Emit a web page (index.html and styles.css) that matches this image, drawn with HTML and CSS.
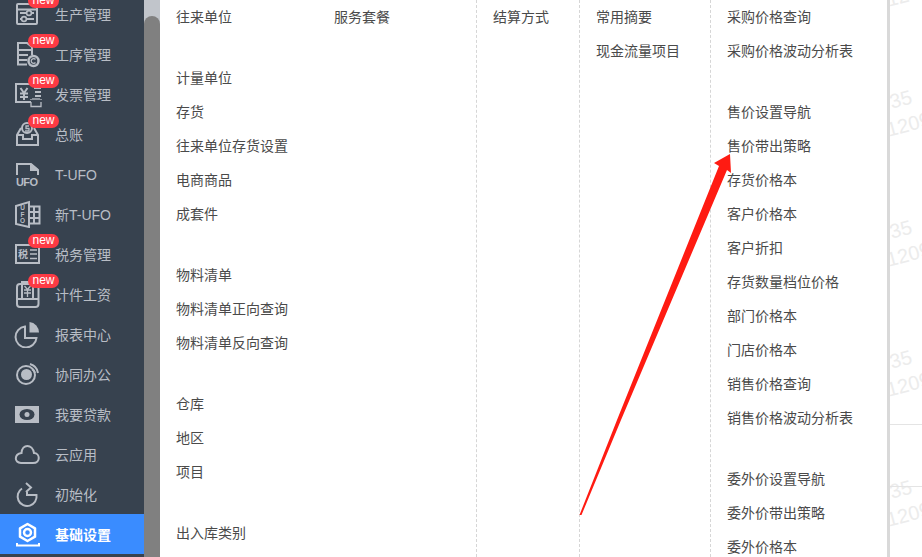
FILE: index.html
```html
<!DOCTYPE html>
<html lang="zh-CN">
<head>
<meta charset="utf-8">
<title>基础设置</title>
<link rel="stylesheet" href="styles.css">
</head>
<body>
<div class="app">
  <nav class="sidebar">
    <div class="nav-list">
      <div class="nav-item"><svg class="ico" viewBox="0 0 28 28"><rect x="3" y="4" width="20" height="20" rx="1"/><path d="M3 9.500H23M6 13H20M6 19H20"/><circle class="pad" cx="15" cy="13" r="2.400"/><circle class="pad" cx="10" cy="19" r="2.400"/></svg><span class="badge">new</span><span>生产管理</span></div>
      <div class="nav-item"><svg class="ico" viewBox="0 0 28 28"><path d="M13 24.500H4V3H13L18 7V15"/><path d="M4 10H17M4 15H14M4 20H13"/><circle class="thick" cx="19.500" cy="21" r="5"/><path class="thin" d="M21.500 19.500A2.400 2.400 0 1 0 21.500 22.500"/></svg><span class="badge">new</span><span>工序管理</span></div>
      <div class="nav-item"><svg class="ico" viewBox="0 0 28 28"><path d="M17 22H2V4H19"/><path d="M6.500 8L10 13L13.500 8M6 13.500H14M6 17H14M10 13V20"/><path d="M20 8H27M21 12H27M21 16H27"/><path class="thin" d="M17 22V26.500H27V22M17 19V20M27 19V20"/><path class="thin" d="M18 19H26"/></svg><span class="badge">new</span><span>发票管理</span></div>
      <div class="nav-item"><svg class="ico" viewBox="0 0 28 28"><path d="M7 8L3 15V25H24V15L20 8"/><path d="M3 15H9V19H18V15H24"/><circle cx="13" cy="8" r="5"/><path class="thin" d="M15 6H12V8.500H15V11H11"/></svg><span class="badge">new</span><span>总账</span></div>
      <div class="nav-item"><svg class="ico" viewBox="0 0 28 28"><path d="M3 15V4H17L24 10V15"/><path class="fill" d="M16 4H18L24 9V11H16Z"/><text class="ico-text" x="2" y="26" textLength="22" lengthAdjust="spacing">UFO</text></svg><span class="nudge">T-UFO</span></div>
      <div class="nav-item"><svg class="ico" viewBox="0 0 28 28"><path d="M2 6L15 2V27L2 24Z"/><path d="M15 6.500H25.500V23.500H15M20 6.500V23.500M15 12H25.500M15 18H25.500"/><text class="ico-text-v" x="8.500" y="10">U</text><text class="ico-text-v" x="8.500" y="16.500">F</text><text class="ico-text-v" x="8.500" y="23">O</text></svg><span>新T-UFO</span></div>
      <div class="nav-item"><svg class="ico" viewBox="0 0 28 28"><rect x="2" y="5" width="23" height="18"/><text class="ico-tax" x="4" y="18">税</text><path class="thin" d="M16 10H23M16 14H23M16 18.500H23"/></svg><span class="badge">new</span><span>税务管理</span></div>
      <div class="nav-item"><svg class="ico" viewBox="0 0 28 28"><rect x="3" y="4" width="21.500" height="23" rx="3"/><path d="M3 19H24.500M8 19V2H19V19"/><path class="thin" d="M10.500 6L13.500 9.500L16.500 6M10 10H17M10 13H17M13.500 9.500V17"/></svg><span class="badge">new</span><span>计件工资</span></div>
      <div class="nav-item"><svg class="ico" viewBox="0 0 28 28"><path d="M11 6.500A10.500 10.500 0 1 0 22.500 18H11Z"/><path class="fill" d="M15.500 2A10.500 10.500 0 0 1 25 12.500H15.500Z"/></svg><span>报表中心</span></div>
      <div class="nav-item"><svg class="ico" viewBox="0 0 28 28"><circle cx="12" cy="15" r="9"/><circle class="fill" cx="12.500" cy="14.500" r="5.500"/><path d="M16 4A11 11 0 0 1 24 13"/><path d="M18 9A6 6 0 0 1 21 13"/></svg><span>协同办公</span></div>
      <div class="nav-item"><svg class="ico" viewBox="0 0 28 28"><rect class="fill" x="1" y="6" width="24" height="17"/><ellipse class="hole" cx="13" cy="14.500" rx="7.500" ry="5.500"/><circle class="fill" cx="13" cy="14.500" r="2.500"/></svg><span>我要贷款</span></div>
      <div class="nav-item"><svg class="ico" viewBox="0 0 28 28"><path d="M7 23H19C27 23 26 13 20 13C18.500 3.500 8 3.500 7.500 13C0 14 0 23 7 23Z"/></svg><span>云应用</span></div>
      <div class="nav-item"><svg class="ico" viewBox="0 0 28 28"><path d="M8 8.500A9.500 9.500 0 1 0 22.500 15H13V12"/><path d="M12 3L17 7.500L12 12"/></svg><span>初始化</span></div>
      <div class="nav-item active"><svg class="ico" viewBox="0 0 28 28"><path class="thick" d="M13.500 4L21 8.300V16.700L13.500 21L6 16.700V8.300Z" stroke-linejoin="round"/><circle class="thick" cx="13.500" cy="12.500" r="3.500"/><path d="M3 23V25.500H25V23"/></svg><span>基础设置</span></div>
    </div>
  </nav>
  <div class="scrollbar"><div class="thumb"></div></div>
  <main class="panel">
    <section class="col col-1">
      <div class="group"><a>往来单位</a></div>
      <div class="group"><a>计量单位</a><a>存货</a><a>往来单位存货设置</a><a>电商商品</a><a>成套件</a></div>
      <div class="group"><a>物料清单</a><a>物料清单正向查询</a><a>物料清单反向查询</a></div>
      <div class="group"><a>仓库</a><a>地区</a><a>项目</a></div>
      <div class="group"><a>出入库类别</a></div>
    </section>
    <section class="col col-2">
      <div class="group"><a>服务套餐</a></div>
    </section>
    <section class="col col-3">
      <div class="group"><a>结算方式</a></div>
    </section>
    <section class="col col-4">
      <div class="group"><a>常用摘要</a><a>现金流量项目</a></div>
    </section>
    <section class="col col-5">
      <div class="group"><a>采购价格查询</a><a>采购价格波动分析表</a></div>
      <div class="group"><a>售价设置导航</a><a>售价带出策略</a><a>存货价格本</a><a>客户价格本</a><a>客户折扣</a><a>存货数量档位价格</a><a>部门价格本</a><a>门店价格本</a><a>销售价格查询</a><a>销售价格波动分析表</a></div>
      <div class="group"><a>委外价设置导航</a><a>委外价带出策略</a><a>委外价格本</a></div>
    </section>
  </main>
  <aside class="rest">
    <div class="marks">
      <div class="tile"><span class="m35">35</span><span class="m12">1209</span></div>
      <div class="tile"><span class="m35">35</span><span class="m12">1209</span></div>
      <div class="tile"><span class="m35">35</span><span class="m12">1209</span></div>
      <div class="tile"><span class="m35">35</span><span class="m12">1209</span></div>
      <div class="tile"><span class="m35">35</span><span class="m12">1209</span></div>
    </div>
    <div class="rule rule-a"></div>
    <div class="rule rule-b"></div>
  </aside>
  <svg class="arrow" viewBox="0 0 922 557" aria-hidden="true"><polygon points="579.500,515 617,420 719,166 714,163 730,154 731,173 727,170 621,420 581.500,515"/></svg>
</div>
</body>
</html>
```

FILE: styles.css
```css
* { box-sizing: border-box; }
html, body { margin: 0; height: 100%; overflow: hidden; background: #fff; }
body { font: 14px "Liberation Sans", "Noto Sans CJK SC", sans-serif; }

.app { position: relative; display: flex; height: 557px; width: 922px; overflow: hidden; }

.sidebar { width: 144px; flex: none; background: #37424f; color: #b8bdc5; overflow: hidden; }
.nav-list { margin-top: -6px; }
.nav-item { position: relative; display: flex; align-items: center; height: 40px; padding-left: 14px; gap: 13px; }
.nav-item.active { background: #3a8cff; color: #fff; font-weight: 700; }
.nudge { padding-top: 2px; }

.ico { width: 28px; height: 28px; flex: none; fill: none; stroke: #b8bdc5; stroke-width: 2; }
.active .ico { stroke: #fff; }
.ico .thin { stroke-width: 1.3; }
.ico .thick { stroke-width: 2.5; }
.ico .fill { fill: #b8bdc5; stroke: none; }
.ico .pad { fill: #37424f; stroke-width: 1.6; }
.ico .hole { fill: #37424f; stroke: none; }
.ico-text { font: 700 11px "Liberation Sans", sans-serif; fill: #b8bdc5; stroke: none; }
.ico-text-v { font: 700 6.500px "Liberation Sans", sans-serif; text-anchor: middle; fill: #b8bdc5; stroke: none; }
.ico-tax { font: 700 10px "Noto Sans CJK SC", sans-serif; fill: #b8bdc5; stroke: none; }

.badge { position: absolute; left: 28px; top: 0; width: 31px; height: 14px; border-radius: 7px; background: #fd3a44; color: #fff; font: 12px/13px "Liberation Sans", sans-serif; text-align: center; }

.scrollbar { width: 16px; flex: none; background: #c1c5cb; padding-top: 16px; }
.thumb { height: 100%; background: #808080; border-radius: 8px 8px 0 0; }

.panel { display: flex; width: 730px; flex: none; background: #fff; border-right: 3px solid #d9d9d9; color: #4a4a4a; }
.col { flex: none; }
.col a { display: block; height: 34px; line-height: 34px; white-space: nowrap; }
.group { margin-bottom: 27px; }
.col-1 { width: 174px; padding-left: 16px; }
.col-2 { width: 143px; border-right: 1px dashed #d6d6d6; }
.col-3 { width: 103px; padding-left: 16px; border-right: 1px dashed #d6d6d6; }
.col-4 { width: 131px; padding-left: 16px; border-right: 1px dashed #d6d6d6; }
.col-5 { width: 176px; padding-left: 16px; }

.rest { position: relative; flex: 1; overflow: hidden; background: #fff; }
.marks { margin-top: -40px; color: #ececec; font-size: 20px; line-height: 24px; }
.tile { height: 130px; white-space: nowrap; }
.m35, .m12 { display: block; transform-origin: 0 50%; transform: rotate(-15deg); }
.m12 { margin: 4px 0 0 -3px; }
.rule { position: absolute; left: 0; right: 0; height: 1px; background: #e4e4e4; }
.rule-a { top: 424px; }
.rule-b { top: 486px; }

.arrow { position: absolute; left: 0; top: 0; width: 922px; height: 557px; pointer-events: none; }
.arrow polygon { fill: #ff1b12; }
```
